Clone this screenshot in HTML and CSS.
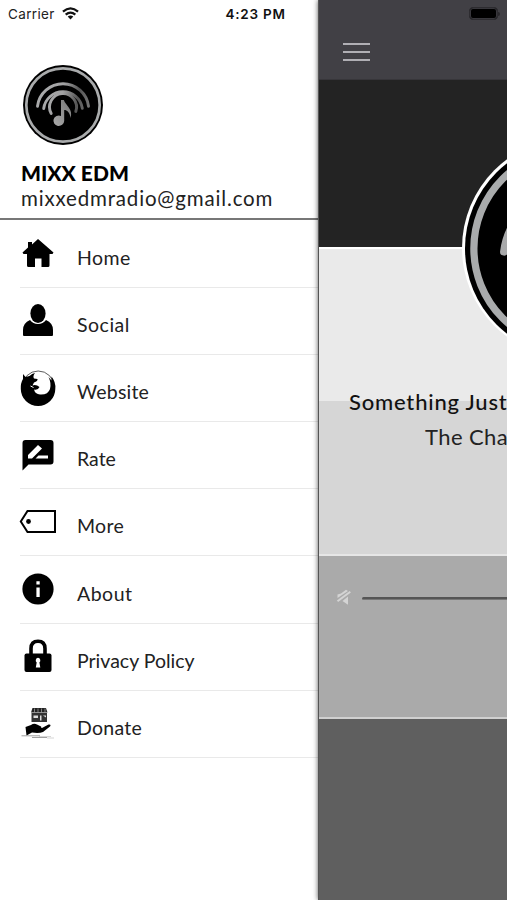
FILE: index.html
```html
<!DOCTYPE html>
<html lang="en">
<head>
<meta charset="utf-8">
<title>MIXX EDM</title>
<link rel="stylesheet" href="styles.css">
</head>
<body>
<svg class="defs" aria-hidden="true">
  <defs>
    <linearGradient id="silver" gradientUnits="userSpaceOnUse" x1="-26" y1="-5" x2="26" y2="5">
      <stop offset="0" stop-color="#a9aaab"/><stop offset=".45" stop-color="#a2a2a3"/><stop offset=".75" stop-color="#555"/><stop offset="1" stop-color="#777"/>
    </linearGradient>
    <linearGradient id="note" x1="0" y1="1" x2="1" y2="0">
      <stop offset="0" stop-color="#aaa"/><stop offset="1" stop-color="#777"/>
    </linearGradient>
    <symbol id="logo" viewBox="-40 -40 80 80">
      <circle r="40" fill="#000"/>
      <circle r="36.7" fill="none" stroke="#a9abac" stroke-width="2.7"/>
      <g fill="none" stroke="url(#silver)" stroke-width="2.9" stroke-linecap="round">
        <path d="M-25.5 1.2A25.7 25.7 0 0 1 25.5 1.2"/>
        <path d="M-19.3 3.5A19.5 19.5 0 0 1 19.3 3.2"/>
        <path d="M-11.8 8.5A13.5 13.5 0 1 1 12.8 6.5"/>
      </g>
      <path d="M-2 13V-5H.8C3 1 10.500 4 7.500 13C7 7.500 4 5 1.200 5V16A5.400 5.200 0 1 1-2 11Z" fill="url(#note)"/>
    </symbol>
  </defs>
</svg>
<div class="screen">
  <aside class="drawer">
    <div class="status">
      <span class="carrier">Carrier</span>
      <svg class="wifi" viewBox="0 0 18 13"><g fill="none" stroke="#111" stroke-width="2.4"><path d="M1 4.600Q9-2.300 17 4.600"/><path d="M3.900 7.800Q9 3.500 14.100 7.800"/></g><path d="M6 9.800Q9 7.600 12 9.800L9 12.900Z" fill="#111"/></svg>
      <span class="time">4:23 PM</span>
    </div>
    <header class="profile">
      <svg class="avatar"><use href="#logo"/></svg>
      <div class="name">MIXX EDM</div>
      <div class="mail">mixxedmradio@gmail.com</div>
    </header>
    <nav class="menu">
      <a class="item"><svg viewBox="0 0 36 36"><path d="M18 3 33.500 16.500 32.500 18H29.500V29.500Q29.500 31 28 31H21.500V22.500H15V31H8.500Q7 31 7 29.500V18H3.500L2.500 16.500 8 11.500V6H12V8.500Z"/></svg><span class="w-home">Home</span></a>
      <a class="item"><svg viewBox="0 0 36 36"><ellipse cx="18" cy="10.500" rx="7.600" ry="9.500"/><path d="M3 32V27Q3 20 10 17Q13 21 18 21T26 17Q33 20 33 27V32Q33 33 32 33H4Q3 33 3 32Z"/></svg><span class="w-social">Social</span></a>
      <a class="item"><svg viewBox="0 0 36 36"><circle cx="18.200" cy="17" r="16" fill="#fff" stroke="#333" stroke-width=".8"/><path d="M3 4 5.500 7 9.500 6Q12 3.500 15 3Q12.500 6 14 8.500L17.500 9Q18 11 14 12.500L12.500 15.500Q16 14 19.500 17Q18 20.500 14 19.500Q15 24 20 24.500Q28 25 30 19Q31.500 13 28.500 7L31.500 10.500 31.500 6.500Q36 12 35.300 19A17.200 17 0 0 1 .8 19Q.5 13 3 9Z"/><path d="M10.500 16 13.500 17.500" stroke="#fff"/></svg><span class="w-website">Website</span></a>
      <a class="item"><svg viewBox="0 0 36 36"><path d="M5.500 2H30.500Q33.500 2 33.500 5V23.500Q33.500 26.500 30.500 26.500H8.500L2.500 32.500V5Q2.500 2 5.500 2Z"/><path d="M8 20.500V17L18 7 22 10.500 12 20.500ZM15.500 20.500 18.500 17.500H28V20.500Z" fill="#fff"/></svg><span class="w-rate">Rate</span></a>
      <a class="item"><svg viewBox="0 0 36 36"><path d="M7.500 6H35V27H7.500L.8 16.500Z" fill="none" stroke="#000" stroke-width="2"/><circle cx="8.500" cy="16.500" r="2.400"/></svg><span class="w-more">More</span></a>
      <a class="item"><svg viewBox="0 0 36 36"><circle cx="18" cy="17" r="15.600"/><path d="M16.400 9.200H19.700V12.400H16.400ZM16.400 15.500H19.700V25H16.400Z" fill="#fff"/></svg><span class="w-about">About</span></a>
      <a class="item"><svg viewBox="0 0 36 36"><path d="M11 16V9.500Q11 2.200 18 2.200T25 9.500V16" fill="none" stroke="#000" stroke-width="3.600"/><rect x="4.500" y="14.500" width="27" height="18.500" rx="2"/><path d="M18 18.800A2.600 2.600 0 0 1 19.400 23.400L20.300 28.500H15.800L16.700 23.400A2.600 2.600 0 0 1 18 18.800Z" fill="#fff"/></svg><span class="w-privacy">Privacy Policy</span></a>
      <a class="item"><svg viewBox="0 0 36 36"><path d="M12.500 2H26L27.500 6.500H11Z" fill="#222"/><path d="M14.500 2.500V6.500M18 2.500V6.500M21.500 2.500V6.500M25 2.500V6.500" stroke="#aaa" stroke-width=".7"/><path d="M11.500 7H27V16H11.500Z" fill="#333"/><path d="M13.500 9.500H18V12H13.500ZM20 9.500H21.500V14.500H20ZM23 9.500H26V11.500Z" fill="#ddd"/><path d="M5.500 21 11 19Q14 17 17 18.500L21 20.500Q22.500 22 19.500 22H22L28.500 18.500Q31.500 18 30 20.500L23 26Q19 27.500 12 26.500L6.500 29.500Z"/><path d="M1.500 29.800H20M12 31.500H27" stroke="#888" stroke-width=".8"/><path d="M19 30.500H31M27 32H34" stroke="#bbb" stroke-width=".6"/></svg><span class="w-donate">Donate</span></a>
    </nav>
  </aside>
  <main class="player">
    <div class="topbar">
      <div class="burger"><i></i><i></i><i></i></div>
      <div class="battery"></div>
    </div>
    <section class="cover"></section>
    <section class="light"></section>
    <section class="track">
      <div class="song">Something Just</div>
      <div class="artist">The Cha</div>
    </section>
    <section class="volume">
      <svg class="mute" viewBox="0 0 16 16"><path d="M1.500 9V5.500L5 4.500 10 .8 12 2Z" fill="#d4d4d4"/><path d="M1.500 12.300 14.300 2.800" stroke="#d4d4d4" stroke-width="2"/><path d="M6.500 12 12 7.500V15.800Z" fill="#d4d4d4"/></svg>
      <div class="slider"></div>
    </section>
    <section class="bottom"></section>
    <div class="disc"><svg><use href="#logo"/></svg></div>
  </main>
</div>
</body>
</html>
```

FILE: styles.css
```css
* { box-sizing: border-box; }
body { margin: 0; font-family: Lato, "Open Sans", sans-serif; }
.defs { position: absolute; width: 0; height: 0; }
.screen { display: flex; width: 507px; height: 900px; overflow: hidden; background: #fff; }

.drawer { flex: 0 0 318px; display: flex; flex-direction: column; background: #fff; }
.status { display: flex; align-items: center; height: 27px; padding-left: 8px; font-family: Inter, sans-serif; color: #222; }
.carrier { width: 47px; font-size: 13.5px; letter-spacing: .35px; white-space: nowrap; }
.wifi { width: 17px; height: 13px; margin-left: 7px; }
.time { margin-left: 146.5px; font-size: 13.5px; font-weight: 600; letter-spacing: .75px; white-space: nowrap; color: #111; }
.profile { height: 193px; padding: 38px 0 0 21px; border-bottom: 2px solid #777; }
.avatar { display: block; width: 80px; height: 80px; margin-left: 2px; overflow: visible; }
.name { margin-top: 15px; font-size: 21px; line-height: 26px; font-weight: 900; color: #000; }
.mail { margin-top: -1px; font-size: 20.5px; line-height: 26px; letter-spacing: .83px; color: #222; white-space: nowrap; }

.menu { display: flex; flex-direction: column; padding-top: .4px; }
.item { display: flex; margin-left: 20px; height: 67.2px; border-bottom: 1px solid #e9e9e9; font-size: 19.5px; line-height: 24px; color: #222; }
.item svg { flex: none; width: 36px; height: 36px; margin: 15.6px 21px 0 0; overflow: visible; }
.item span { margin-top: 25.3px; white-space: nowrap; }
.w-home { letter-spacing: .4px; }
.w-social { letter-spacing: .5px; }
.w-website { letter-spacing: .2px; }
.w-more { letter-spacing: .3px; }
.w-about { letter-spacing: .5px; }
.w-donate { letter-spacing: .25px; }

.player { position: relative; flex: 1; display: flex; flex-direction: column; min-width: 0; border-left: 1px solid #555; box-shadow: 0 0 5px rgba(0,0,0,.65); }
.topbar { display: flex; justify-content: space-between; height: 80px; background: #414045; border-bottom: 1px solid #37363a; }
.burger { display: flex; flex-direction: column; gap: 6px; margin: 43px 0 0 24px; }
.burger i { width: 27px; height: 2px; background: #b0afb4; }
.battery { position: relative; width: 29px; height: 13px; margin: 7px 9px 0 0; border: 1px solid #2d2c30; border-radius: 4px; background: #000; box-shadow: inset 0 0 0 1px #38373c; }
.battery::after { content: ""; position: absolute; left: 28px; top: 4px; width: 2px; height: 4px; background: #29282c; border-radius: 0 2px 2px 0; }
.cover { height: 167px; background: #232323; }
.light { height: 154px; background: #eaeaea; border-top: 2px solid #fff; }
.track { height: 153px; background: #d6d6d6; }
.song { margin: -13px 0 0 30px; font-size: 22px; line-height: 28px; font-weight: 500; letter-spacing: .8px; color: #111; white-space: nowrap; }
.artist { margin: 7px 0 0 106px; font-size: 22px; line-height: 28px; letter-spacing: .4px; color: #222; white-space: nowrap; }
.volume { display: flex; height: 165px; background: #aaa; border-top: 2px solid #e6e6e6; border-bottom: 2px solid #d0d0d0; }
.mute { flex: none; width: 16px; height: 16px; margin: 33px 0 0 17px; }
.slider { flex: 1; height: 3px; margin: 41px 0 0 10px; background: #555; border-radius: 2px 0 0 2px; border-bottom: 1px solid #777; }
.bottom { flex: 1; background: #5f5f5f; }
.disc { position: absolute; left: 143px; top: 138px; width: 220px; height: 220px; padding: 2.5px; border-radius: 50%; background: #fff; }
.disc svg { display: block; width: 215px; height: 215px; }
```
